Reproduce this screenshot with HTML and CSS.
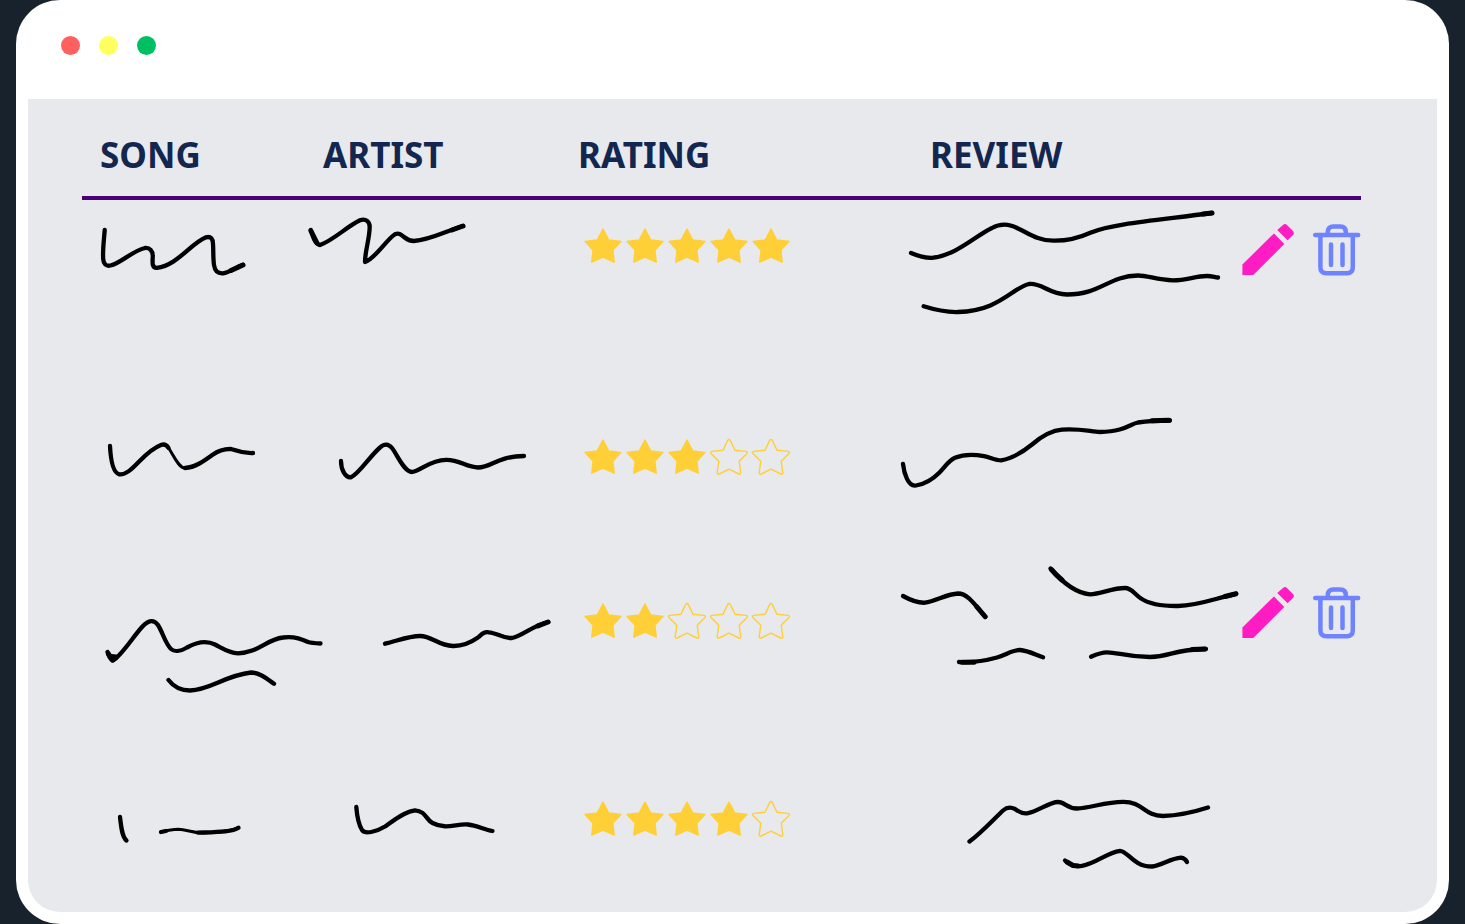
FILE: index.html
```html
<!DOCTYPE html>
<html lang="en">
<head>
<meta charset="utf-8">
<meta name="viewport" content="width=device-width, initial-scale=1">
<title>Song reviews</title>
<link rel="stylesheet" href="styles.css">
</head>
<body>
<svg class="sprite" aria-hidden="true">
  <symbol id="star-full" viewBox="0 0 42 42"><path d="M21 4 26.8 15 39 16.4 30.9 25.2 32.2 37.2 21 32.2 9.8 37.2 11.1 25.2 3 16.4 15.2 15Z"/></symbol>
  <symbol id="star-empty" viewBox="0 0 42 42"><path d="M19.6 4.6Q21 2.4 22.4 4.6L27 14.2 38 15.4Q40.4 16 38.8 17.8L31.2 25.2 32.8 36.6Q32.8 38.8 30.8 38L21 33.2 11.2 38Q9.2 38.8 9.2 36.6L10.8 25.2 3.2 17.8Q1.6 16 4 15.4L15 14.2Z"/></symbol>
  <symbol id="pencil" viewBox="0 0 52 52"><path d="M.4 40.5V51H11.3L42.3 20 32 9.4ZM35.2 6 41 .9Q43-.7 45 .9L51 7Q52.7 9.2 51 11L45.6 16.3Z"/></symbol>
  <symbol id="trash" viewBox="0 0 48 52"><path d="M2.2 11H45.2M7.4 11V43.2Q7.4 49.2 13.4 49.2H33.8Q39.8 49.2 39.8 43.2V11M14.8 11V8Q14.8 2.4 20.4 2.4H27.2Q32.8 2.4 32.8 8V11M18 20.5V41M29.5 20.5V41"/></symbol>
</svg>

<main class="window">
  <header class="titlebar">
    <span class="dot dot-red"></span>
    <span class="dot dot-yellow"></span>
    <span class="dot dot-green"></span>
  </header>

  <section class="panel">
    <table class="reviews">
      <colgroup>
        <col class="col-song"><col class="col-artist"><col class="col-rating"><col class="col-review"><col class="col-actions">
      </colgroup>
      <thead>
        <tr>
          <th scope="col">SONG</th>
          <th scope="col">ARTIST</th>
          <th scope="col">RATING</th>
          <th scope="col" class="head-review">REVIEW</th>
          <td class="head-empty"></td>
        </tr>
      </thead>
      <tbody>
        <tr>
          <td><svg class="scribble" width="220" height="211" viewBox="82 200 220 211" aria-hidden="true">
            <path d="M104.7 230C104 240 102.5 250 103.2 259C103.5 264 106 266.5 110.5 265.5C121 263 132 251 145 248C150 247.5 152.8 251 152.8 256C152.5 262 151.5 268 157 267.8C177 265.5 190 244 206 237.3C211 236 213 239 213 244C213.5 250 213 258 214 265C215 271.5 218 273.7 223 273.3C230 272 236 267 243 264.8"/>
            <path class="heavy" d="M231 270.5 243 265"/></svg></td>
          <td><svg class="scribble" width="255" height="211" viewBox="305 200 255 211" aria-hidden="true">
            <path d="M310.7 230C313 236 315 245 320 245C334 240 346 227 360 220.3C366 218 369.7 222 369.7 227C369.5 239 365 251 365 262C376 258 386 240 395 234.3C399 232.5 401 234.5 404 237C407 239.5 410 241 414 241C430 240 446 231 463 226"/>
            <path class="heavy" d="M311 231 317 243M452 230 463 226"/></svg></td>
          <td class="rating"><div class="stars" role="img" aria-label="5 of 5 stars">
            <svg class="star"><use href="#star-full"/></svg><svg class="star"><use href="#star-full"/></svg><svg class="star"><use href="#star-full"/></svg><svg class="star"><use href="#star-full"/></svg><svg class="star"><use href="#star-full"/></svg>
          </div></td>
          <td><svg class="scribble" width="340" height="211" viewBox="890 200 340 211" aria-hidden="true">
            <path d="M911 253C918 256 925 258 932 257.8C957 255 975 236 992 228C1000 223.5 1009 223.5 1018 228.5C1029 233.5 1038 240.5 1053 240.7C1066 241 1080 237.5 1091 232.5C1112 223.5 1160 220 1212 213"/>
            <path d="M923.6 306.3C937 310.5 948 312.3 958 312C999 311 1012 288 1029 284C1042 282.5 1048 294 1067 294.5C1101 294.5 1108 276 1138 275.5C1148 275.5 1157 280 1173 280.3C1187 280.3 1195 276 1207 276C1212 276 1214 277 1218 277.5"/>
            <path class="heavy" d="M1203 214 1212 213"/></svg></td>
          <td><div class="actions">
            <button class="icon-button edit" type="button" aria-label="Edit review"><svg width="52" height="52"><use href="#pencil"/></svg></button>
            <button class="icon-button delete" type="button" aria-label="Delete review"><svg width="48" height="52"><use href="#trash"/></svg></button>
          </div></td>
        </tr>
        <tr>
          <td><svg class="scribble" width="220" height="152" viewBox="82 411 220 152" aria-hidden="true">
            <path d="M110 446C110.5 456 112 472 119 474.3C132 476 142 452 161 445C165 443.5 167 445.5 168.5 448"/>
            <path class="light" d="M168 447C174 456 179 468.5 185 468"/>
            <path d="M185 468C195 467.5 204 461 213 454.5C219 450 226 449 230.5 448.8C234 449.5 240 453.5 253 453"/></svg></td>
          <td><svg class="scribble" width="255" height="152" viewBox="305 411 255 152" aria-hidden="true">
            <path d="M341 461C341 469 345 478 351 477.3C359 474 370 456 380 447.5C384 443.5 388.5 443.5 392 448C398 456 404 471.5 412 472C422 470 430 460 446 459.8C460 459.5 466 467.5 478 467.5C492 467.5 496 456.5 524 456"/></svg></td>
          <td class="rating"><div class="stars" role="img" aria-label="3 of 5 stars">
            <svg class="star"><use href="#star-full"/></svg><svg class="star"><use href="#star-full"/></svg><svg class="star"><use href="#star-full"/></svg><svg class="star star-off"><use href="#star-empty"/></svg><svg class="star star-off"><use href="#star-empty"/></svg>
          </div></td>
          <td><svg class="scribble" width="340" height="152" viewBox="890 411 340 152" aria-hidden="true">
            <path d="M903 464C904 473 908 487 916 485.5C925 484 934 478 939 473C945 467 948 461 955 457.8C963 454.5 975 454.5 984 456.2C990 457.3 996 460.3 1001 460.3C1013 458.5 1024 451 1032 444.5C1042 436 1051 430.5 1062 429.7C1080 428.5 1090 431.5 1100 432C1125 431.5 1130 424 1138 422.5C1148 421 1160 420.5 1170 420.5"/>
            <path class="heavy" d="M1152 420.8 1169 420.3"/></svg></td>
          <td></td>
        </tr>
        <tr>
          <td><svg class="scribble" width="220" height="210" viewBox="82 563 220 210" aria-hidden="true">
            <path d="M107.5 652C109 656 110 660 113 660.5C121 656 133 637 142 627C149 619.5 154 619.5 158 625C163 633 165 643 171 649C175 652.5 182 650.5 187 647.5C196 642.5 206 640 215 644.5C222 648 229 653 238 653.3C258 653 266 639.5 283 637.5C293 636 301 638.5 308 642C311 643 316 643.3 320.5 643.5"/>
            <path d="M168.5 680C173 686 180 690.5 190 690.5C210 690 225 675.5 251 672.5C260 672.5 267 679 274 683.7"/>
            <path class="heavy" d="M108.5 654 112.5 660 116 657 111.5 656.5"/></svg></td>
          <td><svg class="scribble" width="255" height="210" viewBox="305 563 255 210" aria-hidden="true">
            <path d="M385 643.7C397 641 409 636 420 636C432 636 438 645.5 453 646C464 646.3 473 641 478 637.5C482 634 484 631.5 489 632.3C497 633 503 638.5 512 638C522 636 532 626 548.3 622"/>
            <path class="heavy" d="M538 625.8 548 622"/></svg></td>
          <td class="rating rating-lower"><div class="stars" role="img" aria-label="2 of 5 stars">
            <svg class="star"><use href="#star-full"/></svg><svg class="star"><use href="#star-full"/></svg><svg class="star star-off"><use href="#star-empty"/></svg><svg class="star star-off"><use href="#star-empty"/></svg><svg class="star star-off"><use href="#star-empty"/></svg>
          </div></td>
          <td><svg class="scribble" width="340" height="210" viewBox="890 563 340 210" aria-hidden="true">
            <path d="M903 596C912 601 919 603 925 602.7C936 601 947 594 958 593.5C968 593.5 975 605 985.5 617"/>
            <path d="M1050.5 568.5C1062 582 1076 593 1090 594.3C1101 594 1112 588 1125 588C1132 588 1134 594 1141 598.5C1150 604.5 1162 606.2 1178 606C1199 605.5 1213 599 1236 593.8"/>
            <path d="M959 662C975 663 986 660.5 997 657.5C1006 655 1013 649.5 1020 650C1028 650.5 1036 655 1043 657.3"/>
            <path d="M1091 656.7C1096 654.5 1102 652.3 1107 652.3C1118 652.3 1126 657 1150 657C1172 656.5 1172 649.5 1206 649"/>
            <path class="heavy" d="M977 607 985 616.5M1051.5 569.7Q1056 575 1062 580M1225 596.5 1236 593.8M1192 649.6 1205 649.1M962 662.2H974"/></svg></td>
          <td><div class="actions">
            <button class="icon-button edit" type="button" aria-label="Edit review"><svg width="52" height="52"><use href="#pencil"/></svg></button>
            <button class="icon-button delete" type="button" aria-label="Delete review"><svg width="48" height="52"><use href="#trash"/></svg></button>
          </div></td>
        </tr>
        <tr>
          <td><svg class="scribble" width="220" height="120" viewBox="82 773 220 120" aria-hidden="true">
            <path d="M120 817C121 826 122 837 126.5 840.5"/>
            <path class="light" d="M161 832C167 830.5 172 829.3 178 829.3C187 829.5 192 832.8 202 832.8C217 832 232 832 238.5 827.5"/>
            <path d="M161 832 166 831M198 832.7C217 832 232 832 238.5 827.7"/></svg></td>
          <td><svg class="scribble" width="255" height="120" viewBox="305 773 255 120" aria-hidden="true">
            <path d="M356.3 807C357 816 359 825 362 830C365 834.5 376 832 385 826.5C392 821.5 404 811.5 415 810.3C426 811 426 820 432.5 823C446 830 456 823.5 468 824.5C477 825.5 484 829.5 492.5 831"/></svg></td>
          <td class="rating"><div class="stars" role="img" aria-label="4 of 5 stars">
            <svg class="star"><use href="#star-full"/></svg><svg class="star"><use href="#star-full"/></svg><svg class="star"><use href="#star-full"/></svg><svg class="star"><use href="#star-full"/></svg><svg class="star star-off"><use href="#star-empty"/></svg>
          </div></td>
          <td><svg class="scribble" width="340" height="120" viewBox="890 773 340 120" aria-hidden="true">
            <path d="M969.5 841.5C981 833 993 820 1003 810.5C1007 807 1011 807 1015 809C1019 812 1022 814 1027 813.3C1038 811.5 1049 802 1058 802C1065 802 1067 808.5 1077 808.5C1091 808 1105 801.8 1123 801.8C1143 801.5 1144 816 1163 816C1179 815.5 1194 812 1208 807.5"/>
            <path d="M1065 860.5C1070 865 1075 867 1082 865.8C1096 863.5 1107 852.5 1120 850.8C1128 851 1133 866.5 1152 866.5C1162 865.5 1170 858.5 1181 857.7C1184 858 1186 860 1187 862"/>
            <path class="heavy" d="M1067 862 1073 865.5 1078 866"/></svg></td>
          <td></td>
        </tr>
      </tbody>
    </table>
  </section>
</main>
</body>
</html>
```
FILE: styles.css
```css
* {
  box-sizing: border-box;
}

body {
  margin: 0;
  background: #18222c;
  font-family: "Noto Sans", "Open Sans", sans-serif;
}

.sprite {
  display: none;
}

.window {
  display: flex;
  flex-direction: column;
  min-height: 100vh;
  margin: 0 16px;
  padding: 0 12px 12px;
  background: #fff;
  border-radius: 44px;
}

.titlebar {
  display: flex;
  gap: 19px;
  padding: 36px 33px 44px;
}

.dot {
  width: 19px;
  height: 19px;
  border-radius: 50%;
}

.dot-red {
  background: #ff5f5f;
}

.dot-yellow {
  background: #ffff5e;
}

.dot-green {
  background: #00bf63;
}

.panel {
  flex: 1;
  padding: 0 76px 0 54px;
  background: #e7e9ec;
  border-radius: 0 0 32px 32px;
}

.reviews {
  width: 100%;
  table-layout: fixed;
  border-collapse: separate;
  border-spacing: 0;
}

.col-song {
  width: 223px;
}

.col-artist {
  width: 255px;
}

.col-rating {
  width: 330px;
}

.col-review {
  width: 340px;
}

.col-actions {
  width: 131px;
}

.reviews th,
.reviews .head-empty {
  padding: 32px 0 17px 18px;
  border-bottom: 4px solid #4b0075;
  color: #12264f;
  font-size: 35px;
  font-weight: 700;
  line-height: 48px;
  text-align: left;
}

.reviews .head-review {
  padding-left: 40px;
}

.reviews td {
  padding: 0;
  vertical-align: top;
}

.scribble {
  display: block;
  overflow: visible;
  fill: none;
  stroke: #000;
  stroke-width: 4.3;
  stroke-linecap: round;
  stroke-linejoin: round;
}

.heavy {
  stroke-width: 5;
}

.light {
  stroke-width: 3;
}

.reviews .rating {
  padding: 25px 0 0 22px;
}

.reviews .rating-lower {
  padding-top: 37px;
}

.stars {
  display: flex;
}

.star {
  width: 42px;
  height: 42px;
  fill: #ffcf37;
  stroke: #ffcf37;
  stroke-width: 1.4;
  stroke-linejoin: round;
}

.star-off {
  fill: none;
}

.actions {
  display: flex;
  gap: 19px;
  padding: 24px 0 0 12px;
}

.icon-button {
  flex: none;
  padding: 0;
  border: 0;
  background: none;
  cursor: pointer;
}

.icon-button svg {
  display: block;
}

.edit {
  fill: #ff1dc3;
}

.delete {
  fill: none;
  stroke: #6f83ff;
  stroke-width: 4.5;
  stroke-linecap: round;
}
```
